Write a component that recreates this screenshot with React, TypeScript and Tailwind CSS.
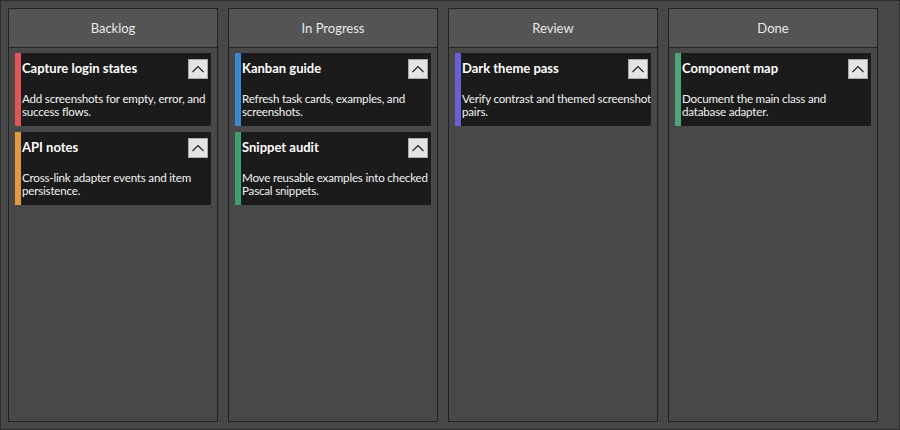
type Card = { title: string; lines: string[]; color: string };
type Column = { name: string; cards: Card[] };

const columns: Column[] = [
  {
    name: "Backlog",
    cards: [
      { title: "Capture login states", lines: ["Add screenshots for empty, error, and", "success flows."], color: "bg-[#e05555]" },
      { title: "API notes", lines: ["Cross-link adapter events and item", "persistence."], color: "bg-[#e39a3b]" },
    ],
  },
  {
    name: "In Progress",
    cards: [
      { title: "Kanban guide", lines: ["Refresh task cards, examples, and", "screenshots."], color: "bg-[#3f88cf]" },
      { title: "Snippet audit", lines: ["Move reusable examples into checked", "Pascal snippets."], color: "bg-[#3f9e6c]" },
    ],
  },
  {
    name: "Review",
    cards: [
      { title: "Dark theme pass", lines: ["Verify contrast and themed screenshot", "pairs."], color: "bg-[#6a5fd0]" },
    ],
  },
  {
    name: "Done",
    cards: [
      { title: "Component map", lines: ["Document the main class and", "database adapter."], color: "bg-[#4aa676]" },
    ],
  },
];

function Chevron() {
  return (
    <svg width="12" height="8" viewBox="0 0 12 8" fill="none">
      <polyline points="0.5,7 6,1.5 11.5,7" stroke="#1e1e1e" strokeWidth="1.1" />
    </svg>
  );
}

function TaskCard({ card }: { card: Card }) {
  return (
    <div className="flex bg-[#1b1b1b] h-[73px]">
      <div className={`w-[6px] shrink-0 ${card.color}`} />
      <div className="flex-1 min-w-0 pl-[1px] pt-[6px] overflow-hidden">
        <div className="flex items-center justify-between h-[20px] pr-[3px]">
          <span className="text-[13px] font-bold text-white">{card.title}</span>
          <button className="w-[20px] h-[20px] flex items-center justify-center bg-[#e4e4e4] border border-[#a8a8a8]">
            <Chevron />
          </button>
        </div>
        <div className="mt-[13px] text-[11.6px] tracking-[-0.2px] leading-[13px] text-[#f2f2f2] whitespace-nowrap">
          {card.lines.map((l) => (
            <div key={l}>{l}</div>
          ))}
        </div>
      </div>
    </div>
  );
}

export default function App() {
  return (
    <div
      className="w-[900px] h-[430px] bg-[#474747] border border-[#2b2b2b] p-[7px] flex gap-[10px]"
      style={{ fontFamily: 'Lato, "Noto Sans", sans-serif' }}
    >
      {columns.map((col) => (
        <div key={col.name} className="w-[210px] h-full flex flex-col bg-[#484848] border border-[#222]">
          <div className="h-[39px] shrink-0 flex items-center justify-center bg-[#545454] border-b border-[#262626] text-[13px] text-[#e8e8e8] pt-[2px]">
            {col.name}
          </div>
          <div className="flex flex-col gap-[6px] px-[6px] pt-[5px]">
            {col.cards.map((c) => (
              <TaskCard key={c.title} card={c} />
            ))}
          </div>
        </div>
      ))}
    </div>
  );
}
